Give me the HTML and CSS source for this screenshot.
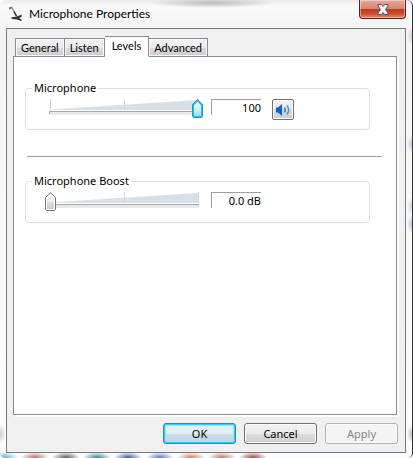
FILE: index.html
```html
<!DOCTYPE html>
<html lang="en">
<head>
<meta charset="utf-8">
<title>Microphone Properties</title>
<link rel="stylesheet" href="styles.css">
</head>
<body>
<main class="window">
  <header class="titlebar">
    <svg class="mic" width="16" height="17" viewBox="0 0 16 17" aria-hidden="true">
      <path d="M1 2.500 4.500 1.500" stroke="#777" stroke-width="2"/>
      <path d="M4 2 9 11" stroke="#999" stroke-width="1.500"/>
      <path d="M6 5.500 8.500 10" stroke="#333" stroke-width="1.500"/>
      <path d="M3 11.500 9 10.500 13.500 8.500V11L11 12 13.500 13.500V15L9 13.500 4 13Z" fill="#333"/>
    </svg>
    <h1 class="title">Microphone Properties</h1>
    <button class="close" type="button" aria-label="Close">
      <svg width="12" height="11" viewBox="0 0 12 11" aria-hidden="true">
        <path d="M1 .5H4.500L6 2.500 7.500.5H11V2L8.500 5.500 11 9V10.500H7.500L6 8.500 4.500 10.500H1V9L3.500 5.500 1 2Z" fill="#f4f4f6" stroke="#535666"/>
      </svg>
    </button>
  </header>
  <div class="client">
    <div class="tabs" role="tablist">
      <button class="tab" role="tab" type="button">General</button>
      <button class="tab" role="tab" type="button">Listen</button>
      <button class="tab active" role="tab" type="button" aria-selected="true">Levels</button>
      <button class="tab" role="tab" type="button">Advanced</button>
    </div>
    <section class="pane" role="tabpanel">
      <fieldset class="group">
        <legend><label for="mic">Microphone</label></legend>
        <div class="row">
          <div class="slider">
            <svg class="scale" width="158" height="19" viewBox="0 0 158 19" aria-hidden="true">
              <path d="M5 10.500 153 1V11H5Z" fill="#d7dfe7"/>
              <path d="M5.500 0V11M79.500 0V11M153.500 0V11" stroke="#d3d6d8"/>
              <path d="M4 14.500H154" stroke="#e7eaea" stroke-width="3"/>
              <path d="M4 12.500H154M4.500 12V15" stroke="#a4a8a8"/>
            </svg>
            <input class="range hot" id="mic" type="range" min="0" max="100" value="100">
          </div>
          <input class="value" type="text" value="100" aria-label="Microphone level" readonly>
          <button class="mute" type="button" aria-label="Mute">
            <svg width="16" height="14" viewBox="0 0 16 14" aria-hidden="true">
              <path d="M1 4.500H3L7 1V13L3 9.500H1Z" fill="#0b62c9"/>
              <path d="M9.500 4.500Q11 7 9.500 9.500" fill="none" stroke="#2a83dc" stroke-width="1.500"/>
              <path d="M12 2.500Q15.500 7 12 11.500" fill="none" stroke="#4a97e0" stroke-width="1.500"/>
            </svg>
          </button>
        </div>
      </fieldset>
      <hr class="rule">
      <fieldset class="group">
        <legend><label for="boost">Microphone Boost</label></legend>
        <div class="row">
          <div class="slider">
            <svg class="scale" width="158" height="19" viewBox="0 0 158 19" aria-hidden="true">
              <path d="M5 10.500 153 1V11H5Z" fill="#d7dfe7"/>
              <path d="M5.500 0V11M79.500 0V11M153.500 0V11" stroke="#d3d6d8"/>
              <path d="M4 14.500H154" stroke="#e7eaea" stroke-width="3"/>
              <path d="M4 12.500H154" stroke="#a4a8a8"/>
            </svg>
            <input class="range" id="boost" type="range" min="0" max="30" value="0">
          </div>
          <input class="value" type="text" value="0.0 dB" aria-label="Boost level" readonly>
        </div>
      </fieldset>
    </section>
    <footer class="actions">
      <button class="btn default" type="button">OK</button>
      <button class="btn" type="button">Cancel</button>
      <button class="btn" type="button" disabled>Apply</button>
    </footer>
  </div>
</main>
</body>
</html>
```

FILE: styles.css
```css
* { box-sizing: border-box; }

body {
  margin: 0;
  font: 11px/14px "Noto Sans", "Open Sans", sans-serif;
  color: #000;
}

button, input { font: inherit; color: inherit; margin: 0; padding: 0; }

.window {
  display: flex;
  flex-direction: column;
  min-height: 100vh;
  padding: 0 6px 5px;
  border-right: 1px solid #333;
  border-radius: 6px 6px 5px 5px;
  background:
    radial-gradient(ellipse 14px 6px at 35px 100%, #c4625e, transparent),
    radial-gradient(ellipse 14px 6px at 66px 100%, #555, transparent),
    radial-gradient(ellipse 14px 6px at 97px 100%, #317f99, transparent),
    radial-gradient(ellipse 14px 6px at 128px 100%, #315c94, transparent),
    radial-gradient(ellipse 14px 6px at 160px 100%, #5577bb, transparent),
    radial-gradient(ellipse 14px 6px at 191px 100%, #e07848, transparent),
    radial-gradient(ellipse 14px 6px at 222px 100%, #cf6c58, transparent),
    radial-gradient(ellipse 14px 6px at 253px 100%, #ad3546, transparent),
    radial-gradient(ellipse 14px 6px at 4px 100%, #55adc9, transparent),
    radial-gradient(ellipse 5px 9px at 100% 36px, #c5d8ea, transparent),
    radial-gradient(ellipse 5px 9px at 100% 144px, #b4c9e2, transparent),
    radial-gradient(ellipse 5px 9px at 100% 206px, #c5d8ea, transparent),
    radial-gradient(ellipse 5px 9px at 100% 224px, #b4c9e2, transparent),
    radial-gradient(ellipse 5px 9px at 100% 434px, #bbb, transparent),
    radial-gradient(ellipse 6px 10px at 0 434px, #ccc, transparent),
    radial-gradient(ellipse 62px 5px at 212px 3px, #bbb, transparent),
    linear-gradient(#e9e9e9, #fafafa 6px, #f4f4f4 28px, #fbfcfd);
}

.titlebar {
  display: flex;
  align-items: flex-start;
  height: 28px;
}
.mic { margin: 6px 5px 0 2px; }
.title {
  flex: 1;
  margin: 5px 0 0;
  font: 12px/17px Lato, "Open Sans", sans-serif;
}
.close {
  display: flex;
  align-items: center;
  justify-content: center;
  width: 47px;
  height: 19px;
  border: 1px solid #4f2722;
  border-top: 0;
  border-radius: 0 0 4px 4px;
  background: linear-gradient(#e9aa9c, #d9836f 48%, #bd3a1f 50%, #cc4c2d 75%, #e38a6b);
  box-shadow: inset 0 0 0 1px #ffffff66;
}

.client {
  flex: 1;
  display: flex;
  flex-direction: column;
  padding: 7px 7px 8px 6px;
  border: 1px solid #75787c;
  background: #f0f0f0;
}

.tabs {
  display: flex;
  align-items: flex-end;
  height: 21px;
  margin: 0 0 -1px 1px;
  padding-left: 1px;
}
.tab {
  height: 19px;
  padding: 1px 5px 0;
  border: 1px solid #898c95;
  background: linear-gradient(#f3f3f3, #ebebeb 50%, #dddddd 50%, #cdcdcd);
  box-shadow: inset 0 0 0 1px #fafafa;
  font-family: Lato, "Open Sans", sans-serif;
}
.tab + .tab { border-left-width: 0; }
.tab.active {
  z-index: 1;
  height: 21px;
  padding: 0 7px 2px;
  border-bottom-color: #fff;
  background: #fff;
}

.pane {
  flex: 1;
  margin-right: 1px;
  padding: 24px 26px 16px 11px;
  border: 1px solid #898c95;
  background: #fff;
  box-shadow: 2px 2px #fff;
}

.group {
  min-width: 0;
  margin: 0;
  padding: 0 19px 10px;
  border: 1px solid #d5dfe5;
  border-radius: 4px;
}
.group legend {
  margin-left: -13px;
  padding: 0 2px;
}
.row { display: flex; align-items: flex-start; height: 24px; padding-top: 4px; }

.slider { display: grid; width: 158px; }
.scale, .range { grid-area: 1 / 1; }
.range {
  appearance: none;
  width: 158px;
  height: 19px;
  background: none;
}
.range::-webkit-slider-thumb {
  appearance: none;
  width: 11px;
  height: 19px;
  background: url("data:image/svg+xml,%3Csvg xmlns='http://www.w3.org/2000/svg' width='11' height='19'%3E%3ClinearGradient id='g' x2='0' y2='1'%3E%3Cstop stop-color='%23fff'/%3E%3Cstop offset='.5' stop-color='%23eee'/%3E%3Cstop offset='.51' stop-color='%23ddd'/%3E%3Cstop offset='1' stop-color='%23ccc'/%3E%3C/linearGradient%3E%3Cpath d='M.5 5.500 5.500 .7 10.500 5.500V17L9.500 18.500H1.500L.5 17Z' fill='%23fff' stroke='%23777'/%3E%3Cpath d='M2 6 5.500 3 9 6V17H2Z' fill='url(%23g)'/%3E%3C/svg%3E") no-repeat;
}
.range.hot::-webkit-slider-thumb {
  background-image: url("data:image/svg+xml,%3Csvg xmlns='http://www.w3.org/2000/svg' width='11' height='19'%3E%3ClinearGradient id='g' x2='0' y2='1'%3E%3Cstop stop-color='%23f0faff'/%3E%3Cstop offset='.5' stop-color='%23d4effc'/%3E%3Cstop offset='1' stop-color='%23a4daf5'/%3E%3C/linearGradient%3E%3Cpath d='M.5 5.500 5.500 .7 10.500 5.500V17L9.500 18.500H1.500L.5 17Z' fill='%2322c8f4' stroke='%232c8fb8'/%3E%3Cpath d='M2 6.500 5.500 3 9 6.500V17H2Z' fill='url(%23g)'/%3E%3C/svg%3E");
}

.value {
  width: 50px;
  height: 16px;
  margin-left: 8px;
  border: solid #a0a0a0;
  border-width: 1px 0 0 1px;
  background: #fff;
  text-align: right;
}
.mute {
  display: flex;
  align-items: center;
  justify-content: center;
  width: 22px;
  height: 21px;
  margin-left: 11px;
  border: 1px solid #707070;
  border-radius: 2px;
  background: linear-gradient(#f5f5f5, #e4e4e4 50%, #d8d8d8 50%, #d0d0d0);
  box-shadow: inset 0 0 0 1px #fff;
}

.rule {
  height: 1px;
  margin: 26px -12px 17px 2px;
  border: 0;
  background: #a0a0a0;
}

.actions {
  display: flex;
  justify-content: flex-end;
  gap: 8px;
  padding-top: 8px;
}
.btn {
  width: 73px;
  height: 21px;
  border: 1px solid #707070;
  border-radius: 3px;
  background: linear-gradient(#f3f3f3, #ebebeb 50%, #dddddd 50%, #cfcfcf);
  box-shadow: inset 0 0 0 1px #fcfcfc;
}
.btn.default {
  border-color: #3c7fb1;
  background: linear-gradient(#eaf4f9, #dfecf3 50%, #cbdfea 50%, #bcd5e2);
  box-shadow: inset 0 0 0 1px #2fcdf8, inset 0 0 1px 2px #9be3f8;
}
.btn:disabled {
  border-color: #adb2b5;
  background: #f4f4f4;
  color: #838383;
}
```
